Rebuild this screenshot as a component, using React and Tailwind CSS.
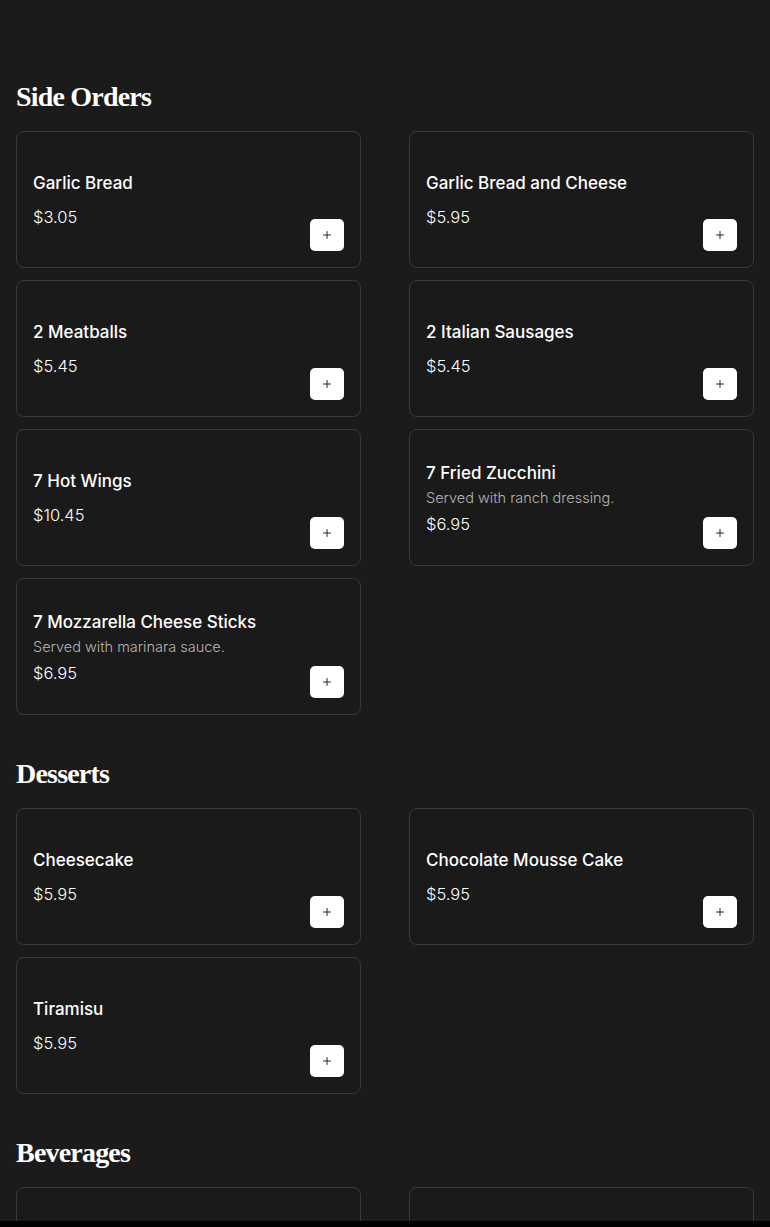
import { Plus } from 'lucide-react'

const sections = [
  {
    title: 'Side Orders',
    items: [
      { name: 'Garlic Bread', price: '$3.05' },
      { name: 'Garlic Bread and Cheese', price: '$5.95' },
      { name: '2 Meatballs', price: '$5.45' },
      { name: '2 Italian Sausages', price: '$5.45' },
      { name: '7 Hot Wings', price: '$10.45' },
      { name: '7 Fried Zucchini', desc: 'Served with ranch dressing.', price: '$6.95' },
      { name: '7 Mozzarella Cheese Sticks', desc: 'Served with marinara sauce.', price: '$6.95' },
    ],
  },
  {
    title: 'Desserts',
    items: [
      { name: 'Cheesecake', price: '$5.95' },
      { name: 'Chocolate Mousse Cake', price: '$5.95' },
      { name: 'Tiramisu', price: '$5.95' },
    ],
  },
  {
    title: 'Beverages',
    items: [
      { name: 'Soda', price: '$2.50' },
      { name: 'Bottled Water', price: '$1.95' },
    ],
  },
]

function ItemCard({ item }) {
  return (
    <div className="h-[137px] rounded-lg border border-[#3a3a3a] bg-[#1a1a1a] p-4 flex justify-between">
      <div className="self-center mt-[2px] text-white">
        <h3 className="text-[17px] leading-[24px] font-medium">{item.name}</h3>
        {item.desc && (
          <p className="text-[14.5px] leading-[26px] font-light text-[#b5b5b5]">{item.desc}</p>
        )}
        <p className={`text-[16.5px] leading-[26px] font-light ${item.desc ? '' : 'mt-[9px]'}`}>
          {item.price}
        </p>
      </div>
      <button className="self-end w-[34px] h-[32px] rounded-[5px] bg-white flex items-center justify-center text-[#222]">
        <Plus size={12} strokeWidth={2} />
      </button>
    </div>
  )
}

export default function App() {
  return (
    <div
      className="min-h-screen bg-[#1b1b1b] px-4 pt-[38px]"
      style={{ fontFamily: 'Inter, "Noto Sans", sans-serif' }}
    >
      {sections.map((s) => (
        <section key={s.title} className="pt-10">
          <h2
            className="text-[28px] leading-[38px] font-bold text-white tracking-[-0.8px] mb-[15px]"
            style={{ fontFamily: '"Liberation Serif", "DejaVu Serif", serif' }}
          >
            {s.title}
          </h2>
          <div className="grid grid-cols-2 gap-x-12 gap-y-3">
            {s.items.map((it) => (
              <ItemCard key={it.name} item={it} />
            ))}
          </div>
        </section>
      ))}
      <div className="fixed bottom-0 left-0 right-0 h-[6px] bg-black" />
    </div>
  )
}
